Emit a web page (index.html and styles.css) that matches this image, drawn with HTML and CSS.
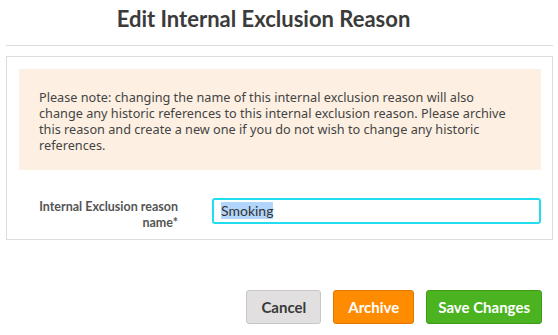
FILE: index.html
```html
<!DOCTYPE html>
<html lang="en">
<head>
  <meta charset="UTF-8" />
  <title>Edit Internal Exclusion Reason</title>
  <link rel="stylesheet" href="styles.css">
</head>
<body>

<div class="modal">
  <h1 class="modal-title">Edit Internal Exclusion Reason</h1>

  <div class="panel">
    <div class="notice">
      Please note: changing the name of this internal exclusion reason will also
      change any historic references to this internal exclusion reason. Please archive
      this reason and create a new one if you do not wish to change any historic
      references.
    </div>

    <div class="form-row">
      <label class="form-label" for="reasonName">Internal Exclusion reason name*</label>
      <div class="form-field">
        <div class="input" id="reasonName"><span class="selected">Smoking</span></div>
      </div>
    </div>
  </div>

  <div class="actions">
    <button class="btn btn-cancel">Cancel</button>
    <button class="btn btn-archive">Archive</button>
    <button class="btn btn-save">Save Changes</button>
  </div>
</div>

</body>
</html>
```

FILE: styles.css
```css
* {
  margin: 0;
  padding: 0;
  box-sizing: border-box;
}

body {
  font-family: 'Lato', 'Liberation Sans', sans-serif;
  background: #fff;
  color: #444;
}

.modal {
  padding: 0 5px 0 6px;
}

/* Header */
.modal-title {
  font-size: 22px;
  font-weight: bold;
  color: #3b3b3b;
  text-align: center;
  height: 46px;
  line-height: 38px;
  padding-right: 32px;
  border-bottom: 1px solid #ddd;
}

/* Panel */
.panel {
  margin-top: 10px;
  border: 1px solid #ddd;
  padding: 12px 11px 8px 12px;
}

.notice {
  background-color: #fdf0e2;
  padding: 20px 20px 17px 20px;
  font-family: 'Noto Sans', 'Liberation Sans', sans-serif;
  font-size: 12.7px;
  line-height: 16px;
  color: #444;
  min-height: 100px;
}

.form-row {
  display: flex;
  align-items: flex-start;
  margin-top: 28px;
}

.form-label {
  width: 159px;
  text-align: right;
  font-size: 12.5px;
  font-weight: bold;
  line-height: 16px;
  color: #555;
  padding: 1px 0 0 20px;
}

.form-field {
  flex: 1;
  padding-left: 34px;
}

.input {
  height: 26px;
  border: 2px solid #22dcef;
  border-radius: 3px;
  padding: 0 7px;
  font-size: 14px;
  line-height: 22px;
  color: #333;
}

.selected {
  background-color: #b2d5fb;
}

/* Footer buttons */
.actions {
  display: flex;
  justify-content: flex-end;
  gap: 12px;
  margin-top: 50px;
  padding-right: 11px;
}

.btn {
  font-family: 'Lato', 'Liberation Sans', sans-serif;
  font-size: 15px;
  font-weight: bold;
  height: 34px;
  padding: 0 14px;
  border-radius: 3px;
  border: 1px solid;
  cursor: pointer;
}

.btn-cancel {
  background-color: #e1dfdf;
  border-color: #c9c6c6;
  color: #3a3a3a;
}

.btn-archive {
  background-color: #ff8c00;
  border-color: #e07800;
  color: #fff;
}

.btn-save {
  background-color: #4bb320;
  border-color: #3c9a16;
  color: #fff;
  padding: 0 11px;
}
```
